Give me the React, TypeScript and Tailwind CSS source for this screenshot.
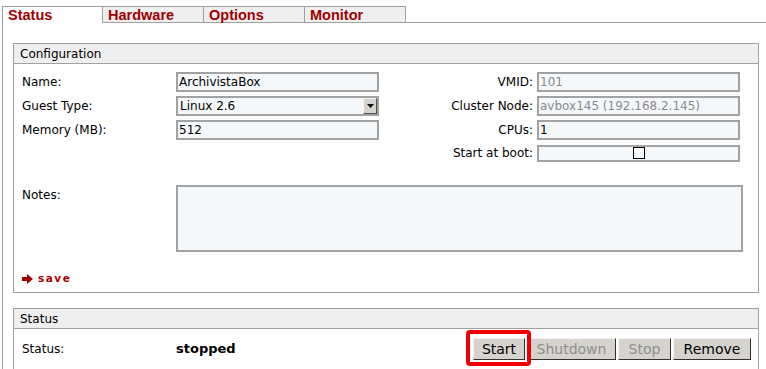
import React from "react"

const tabs = ["Status", "Hardware", "Options", "Monitor"]

function Field({ value, muted, w = "w-[203px]" }: { value: string; muted?: boolean; w?: string }) {
  return (
    <div
      className={`${w} shrink-0 h-[20px] border-2 border-[#a2a2a2] bg-[#f5f8fb] flex items-center pl-[1px] ${
        muted ? "text-[#8a8a8a]" : "text-black"
      }`}
    >
      {value}
    </div>
  )
}

function Btn({ label, w, disabled }: { label: string; w: string; disabled?: boolean }) {
  return (
    <div
      className={`${w} h-[22px] flex items-center justify-center bg-[#d6d3ce] border border-t-[#f4f4f4] border-l-[#f4f4f4] border-b-[#303030] border-r-[#303030] text-[14px] ${
        disabled ? "text-[#8e8e8e]" : "text-black"
      }`}
    >
      {label}
    </div>
  )
}

export default function App() {
  return (
    <div className="w-[766px] h-[369px] overflow-hidden bg-white font-['DejaVu_Sans',sans-serif] text-[12px] text-black">
      {/* tab bar */}
      <div className="flex pt-[6px] pl-[2px]">
        {tabs.map((t, i) => (
          <div
            key={t}
            className={`w-[101px] h-[17px] border-t border-r border-[#a0a0a0] pl-[5px] pt-[1px] font-['Liberation_Sans',sans-serif] font-bold text-[14.5px] leading-[15px] text-[#a00000] ${
              i === 0 ? "bg-white border-l" : "bg-[#efefef] border-b"
            }`}
          >
            {t}
          </div>
        ))}
        <div className="flex-1 border-b border-[#a0a0a0]" />
      </div>

      <div className="ml-[2px] border-l border-[#a0a0a0] pt-[20px] pl-[10px]">
        {/* Configuration */}
        <div className="w-[746px] border border-[#a0a0a0]">
          <div className="h-[20px] bg-[#efefef] border-b border-[#a0a0a0] pl-[6px] flex items-center">
            Configuration
          </div>
          <div className="pt-[8px] pl-[8px] pr-[18px]">
            <div className="flex flex-col gap-[4px]">
              <div className="flex items-center">
                <div className="w-[154px] shrink-0">Name:</div>
                <Field value="ArchivistaBox" />
                <div className="flex-1 text-right pr-[4px]">VMID:</div>
                <Field value="101" muted />
              </div>
              <div className="flex items-center">
                <div className="w-[154px] shrink-0">Guest Type:</div>
                <div className="w-[203px] shrink-0 h-[20px] border-2 border-[#a2a2a2] bg-[#f5f8fb] flex items-center justify-between pl-[2px]">
                  <span>Linux 2.6</span>
                  <div className="w-[14px] h-[16px] bg-[#d6d3ce] border border-t-[#f4f4f4] border-l-[#f4f4f4] border-b-[#505050] border-r-[#505050] flex items-center justify-center">
                    <svg width="7" height="4" viewBox="0 0 7 4">
                      <path d="M0 0H7L3.5 4Z" fill="#000" />
                    </svg>
                  </div>
                </div>
                <div className="flex-1 text-right pr-[4px]">Cluster Node:</div>
                <Field value="avbox145 (192.168.2.145)" muted />
              </div>
              <div className="flex items-center">
                <div className="w-[154px] shrink-0">Memory (MB):</div>
                <Field value="512" />
                <div className="flex-1 text-right pr-[4px]">CPUs:</div>
                <Field value="1" />
              </div>
              <div className="flex items-center">
                <div className="flex-1 text-right pr-[4px]">Start at boot:</div>
                <div className="w-[203px] shrink-0 h-[17px] border-2 border-[#a2a2a2] bg-[#f5f8fb] flex items-center justify-center">
                  <div className="w-[12px] h-[12px] border border-black bg-white" />
                </div>
              </div>
            </div>

            <div className="flex mt-[23px]">
              <div className="w-[154px] shrink-0 pt-[1px]">Notes:</div>
              <div className="w-[567px] shrink-0 h-[67px] border-2 border-[#a2a2a2] bg-[#f5f8fb]" />
            </div>

            <div className="flex items-center gap-[5px] h-[14px] mt-[20px] mb-[6px] text-[#a00000]">
              <svg width="11" height="10" viewBox="0 0 11 10">
                <path d="M0 3H5V0L11 5L5 10V7H0Z" fill="#a00000" />
              </svg>
              <span className="font-bold text-[10.5px] tracking-[1.5px]">save</span>
            </div>
          </div>
        </div>

        {/* Status */}
        <div className="w-[746px] mt-[15px] border border-[#a0a0a0]">
          <div className="h-[20px] bg-[#efefef] border-b border-[#a0a0a0] pl-[6px] flex items-center">
            Status
          </div>
          <div className="flex items-center pt-[9px] pl-[8px] pr-[7px] pb-[10px]">
            <div className="w-[154px] shrink-0">Status:</div>
            <div className="font-bold text-[13px]">stopped</div>
            <div className="flex-1" />
            <div className="flex gap-[2px]">
              <div className="relative">
                <Btn label="Start" w="w-[52px]" />
                <div className="absolute -left-[7px] -top-[8px] -right-[6px] -bottom-[6px] border-[4px] border-[#ee0000] rounded-[4px]" />
              </div>
              <Btn label="Shutdown" w="w-[89px]" disabled />
              <Btn label="Stop" w="w-[53px]" disabled />
              <Btn label="Remove" w="w-[78px]" />
            </div>
          </div>
        </div>
      </div>
    </div>
  )
}
